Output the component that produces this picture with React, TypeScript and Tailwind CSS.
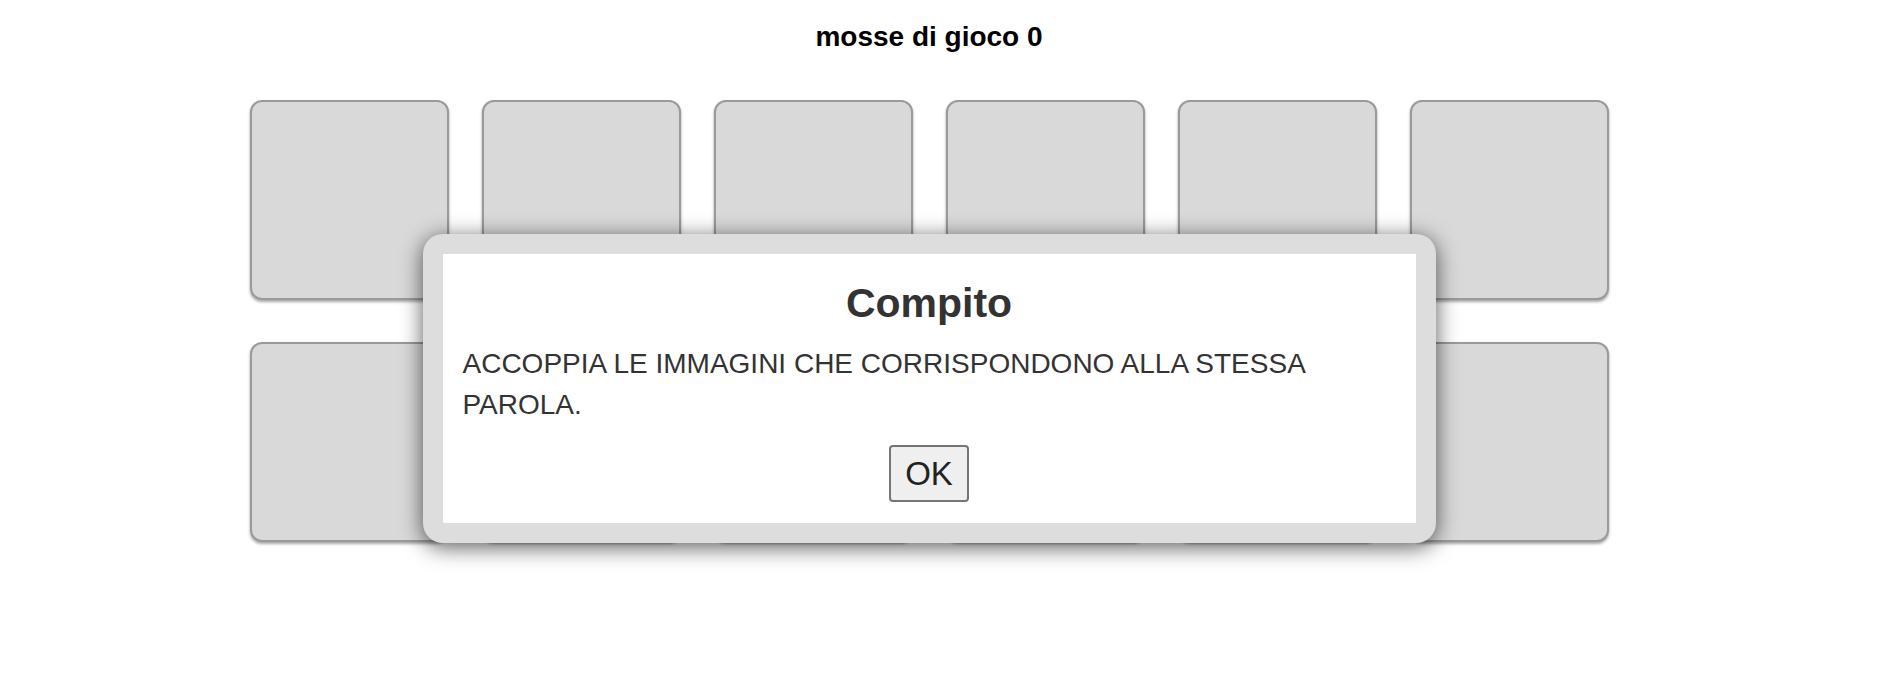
export default function App() {
  const cards = Array.from({ length: 12 }, (_, i) => i);

  return (
    <main className="relative min-h-[694px] w-full bg-white font-['Liberation_Sans',Arial,sans-serif]">
      {/* Board */}
      <div className="pr-[26px]">
        <h1 className="pt-[21px] text-center text-[28px] font-bold leading-[31px] text-black">
          mosse di gioco 0
        </h1>

        <div className="mx-auto mt-[48px] grid w-fit grid-cols-[repeat(6,199px)] gap-x-[33px] gap-y-[42px]">
          {cards.map((i) => (
            <div
              key={i}
              className="h-[200px] rounded-[12px] border-2 border-[#9a9a9a] bg-[#d9d9d9] shadow-[0_2px_3px_rgba(0,0,0,0.35)]"
            />
          ))}
        </div>
      </div>

      {/* Task dialog */}
      <div className="absolute inset-x-0 top-[234px] flex justify-center pr-[26px]">
        <div className="w-[1013px] rounded-[20px] bg-[#dddddd] p-[20px] shadow-[0_4px_22px_rgba(0,0,0,0.65)]">
          <div className="bg-white px-[20px] pt-[26px] pb-[21px] text-[#333333]">
            <h2 className="text-center text-[41px] font-bold leading-[47px]">Compito</h2>
            <p className="mt-[16px] text-[28px] leading-[41px]">
              ACCOPPIA LE IMMAGINI CHE CORRISPONDONO ALLA STESSA PAROLA.
            </p>
            <div className="mt-[20px] flex justify-center">
              <button className="h-[57px] w-[80px] rounded-[4px] border-2 border-[#767676] bg-[#efefef] text-[33px] leading-none text-[#222222]">
                OK
              </button>
            </div>
          </div>
        </div>
      </div>
    </main>
  );
}
